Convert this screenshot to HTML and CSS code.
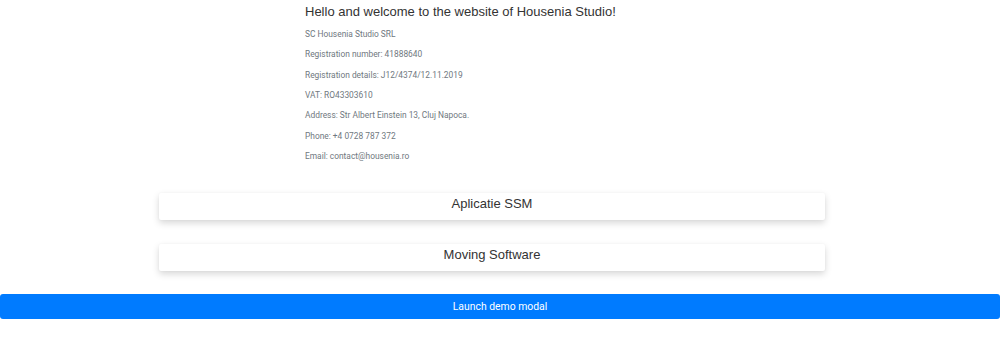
FILE: index.html
```html
<!DOCTYPE html>
<html>
<head>
<meta charset="utf-8">
<link rel="stylesheet" href="styles.css">
</head>
<body>
<div class="intro">
  <h1 class="title">Hello and welcome to the website of Housenia Studio!</h1>
  <p class="info">SC Housenia Studio SRL</p>
  <p class="info">Registration number: 41888640</p>
  <p class="info">Registration details: J12/4374/12.11.2019</p>
  <p class="info">VAT: RO43303610</p>
  <p class="info">Address: Str Albert Einstein 13, Cluj Napoca.</p>
  <p class="info">Phone: +4 0728 787 372</p>
  <p class="info">Email: contact@housenia.ro</p>
</div>
<div class="cards">
  <div class="card">Aplicatie SSM</div>
  <div class="card">Moving Software</div>
</div>
<button class="launch">Launch demo modal</button>
</body>
</html>
```
FILE: styles.css
```css
* { box-sizing: border-box; }
html, body { margin: 0; padding: 0; background: #fff; }
body { width: 1000px; height: 344px; overflow: hidden; }
.intro { padding: 3px 0 0 305px; }
.title {
  margin: 0 0 4px;
  font-family: "Liberation Sans", Arial, sans-serif;
  font-weight: 400;
  font-size: 13px;
  line-height: 17px;
  color: #333;
}
.info {
  margin: 0;
  font-family: Roboto, "Liberation Sans", sans-serif;
  font-size: 8.4px;
  line-height: 20.33px;
  color: #707880;
}
.cards {
  margin: 27px 0 0 159px;
  width: 666px;
  display: flex;
  flex-direction: column;
  gap: 23.5px;
}
.card {
  height: 27px;
  background: #fff;
  border-radius: 2px;
  box-shadow: 0 3px 7px rgba(0,0,0,0.16), 0 0 2px rgba(0,0,0,0.04);
  font-family: "Liberation Sans", Arial, sans-serif;
  font-size: 13px;
  line-height: 15px;
  text-align: center;
  padding-top: 3px;
  color: #333;
}
.launch {
  display: block;
  margin-top: 23.3px;
  width: 1000px;
  height: 25px;
  border: 0;
  border-radius: 3px;
  background: #007bff;
  color: #fff;
  font-family: Roboto, "Liberation Sans", sans-serif;
  font-size: 10.4px;
}
```
